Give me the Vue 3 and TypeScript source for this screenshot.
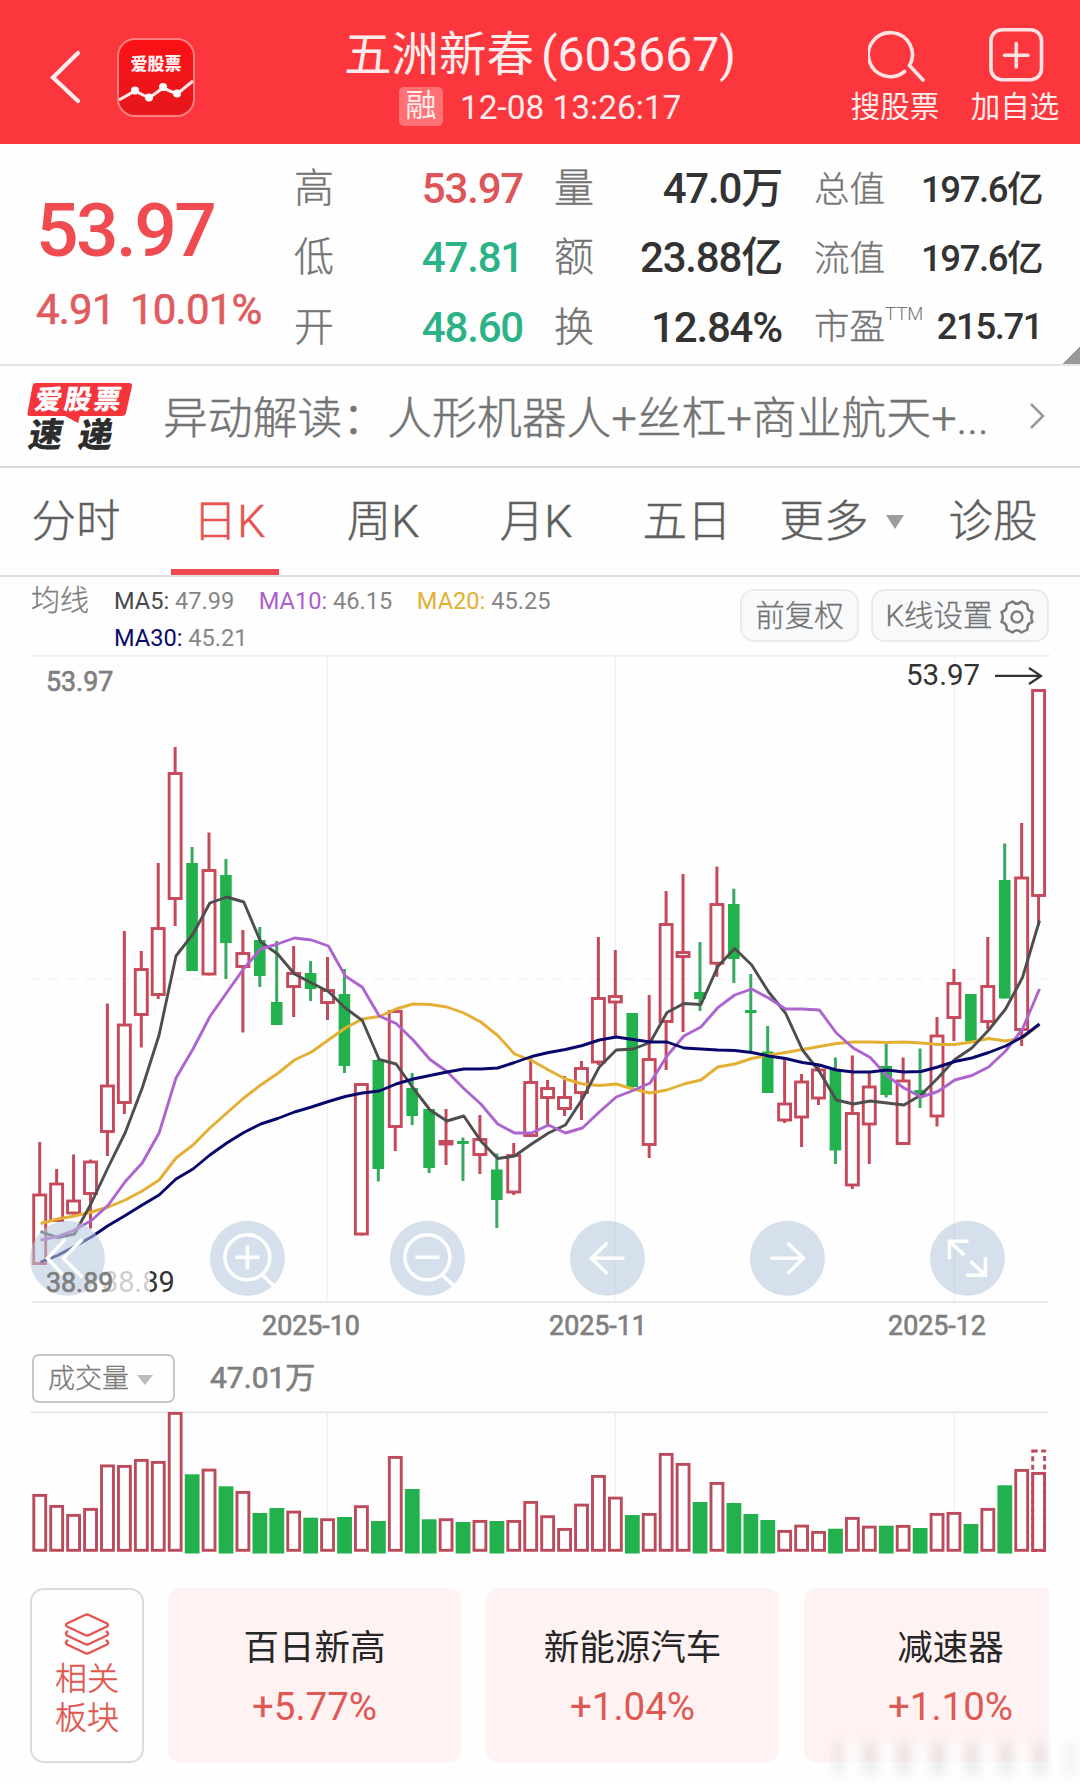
<script setup lang="ts">
interface Quote { label: string; value: string; tone?: string; sup?: string }
interface Candle { x: number; up: boolean; high: number; top: number; bottom: number; low: number; vol: number }

const mainQuotes: Quote[][] = [
  [{ label: '高', value: '53.97', tone: 'up' }, { label: '低', value: '47.81', tone: 'down' }, { label: '开', value: '48.60', tone: 'down' }],
  [{ label: '量', value: '47.0万' }, { label: '额', value: '23.88亿' }, { label: '换', value: '12.84%' }],
  [{ label: '总值', value: '197.6亿' }, { label: '流值', value: '197.6亿' }, { label: '市盈', value: '215.71', sup: 'TTM' }],
]

const tabs = ['分时', '日K', '周K', '月K', '五日', '更多', '诊股']

const averages = [
  { name: 'MA5', value: '47.99', color: '#484848' },
  { name: 'MA10', value: '46.15', color: '#ad5ecb' },
  { name: 'MA20', value: '45.25', color: '#e3b030' },
  { name: 'MA30', value: '45.21', color: '#0a0a6c' },
]

const boards = [
  { name: '百日新高', change: '+5.77%' },
  { name: '新能源汽车', change: '+1.04%' },
  { name: '减速器', change: '+1.10%' },
]

const px = (i: number) => 39.7 + i * 16.93

// direction, high, body top, body bottom, low, volume top
const raw: [string, number, number, number, number, number][] = [
  ['r', 1142, 1193.5, 1265, 1265, 1494], ['r', 1169, 1182.5, 1222, 1222, 1505], ['r', 1154.5, 1199.5, 1214.5, 1214.5, 1514],
  ['r', 1159.5, 1160.5, 1195, 1228.5, 1508], ['r', 1003.5, 1084.5, 1133, 1156, 1464.5], ['r', 931, 1023.5, 1104, 1114, 1465],
  ['r', 951, 968, 1016, 1047.5, 1459], ['r', 863, 927, 996, 999, 1461], ['r', 747, 772, 900, 926, 1412],
  ['g', 847, 863, 971, 971, 1474.3], ['r', 832.5, 869, 975.5, 975.5, 1468.7], ['g', 859, 875, 943, 979, 1486.3],
  ['r', 930, 952, 968, 1032.5, 1491], ['g', 927, 940, 976, 987, 1513], ['g', 941, 1002, 1025, 1025, 1508],
  ['r', 946, 972, 988, 1017, 1510.7], ['g', 961, 973, 989, 1001, 1517.7], ['r', 957, 989, 1004, 1020, 1518.3],
  ['g', 969, 994, 1066, 1073, 1517], ['r', 1083, 1083, 1235.5, 1235.5, 1505.3], ['g', 1059, 1060, 1169, 1181.5, 1521],
  ['r', 1010, 1010, 1128, 1151, 1456], ['g', 1073, 1088, 1116, 1125, 1489], ['g', 1108.5, 1109, 1168, 1173, 1519.3],
  ['r', 1109, 1140, 1145.5, 1165, 1518.3], ['g', 1137.5, 1141, 1144, 1181, 1522], ['r', 1115, 1138, 1156, 1174, 1520],
  ['g', 1153.5, 1169.5, 1200, 1228, 1521], ['r', 1143, 1154, 1193.5, 1195, 1520], ['r', 1056, 1081, 1137, 1137, 1501],
  ['r', 1080, 1087, 1099, 1127, 1515.3], ['r', 1076, 1096, 1110, 1116, 1528], ['r', 1061, 1067, 1094, 1120, 1503.7],
  ['r', 937, 997, 1063.5, 1065, 1475], ['r', 950, 995, 1003.5, 1036.5, 1496.7], ['g', 1013, 1013, 1087, 1088, 1515],
  ['r', 995, 1058, 1146, 1158, 1513], ['r', 891, 923, 1023, 1070, 1453], ['r', 874, 951, 958, 1032, 1463],
  ['g', 942, 992, 999, 1011, 1502], ['r', 866.5, 903, 964.7, 976.7, 1482], ['g', 888.7, 904, 959, 983, 1503],
  ['g', 974, 1010, 1013, 1051, 1514], ['g', 1026, 1051.5, 1093, 1093, 1520], ['r', 1059, 1102.5, 1121.5, 1123, 1530],
  ['r', 1074, 1080.5, 1118.5, 1147, 1524.7], ['r', 1065, 1068.5, 1099.5, 1105, 1531], ['g', 1057.5, 1069, 1150.5, 1164, 1528.7],
  ['r', 1055.5, 1112, 1186.5, 1189, 1517], ['r', 1072.5, 1085.5, 1125.5, 1164, 1525.7], ['g', 1043.5, 1066, 1095, 1097.5, 1525.7],
  ['r', 1057.5, 1079.5, 1145, 1145, 1525], ['g', 1048.5, 1090, 1095, 1108, 1528], ['r', 1017, 1034.5, 1117.5, 1126.5, 1513],
  ['r', 969, 982, 1019, 1041, 1512], ['g', 994, 994, 1041, 1041, 1524], ['r', 937, 985, 1023, 1029, 1508],
  ['g', 843.5, 880, 998.5, 998.5, 1485.3], ['r', 823, 876.5, 1031, 1046, 1469], ['r', 689, 689, 897, 925.5, 1472],
]

const candles: Candle[] = raw.map((r, i) => ({
  x: px(i), up: r[0] === 'r', high: r[1], top: r[2], bottom: r[3], low: r[4], vol: r[5],
}))

const series = [
  { color: '#e3b033', ys: [1223.5, 1219, 1216, 1212, 1207, 1200, 1191, 1180, 1158, 1145, 1128, 1113, 1098, 1085, 1073.5, 1060, 1052, 1040, 1028, 1019, 1016.5, 1009, 1004, 1004.5, 1007, 1013, 1022, 1035.5, 1054, 1060.5, 1070, 1079, 1084, 1085.5, 1084, 1089, 1093, 1090, 1084, 1080, 1067, 1064, 1058.5, 1055, 1052.5, 1049.5, 1046.5, 1043.5, 1042, 1042, 1042.5, 1042, 1043, 1044.5, 1044.5, 1042, 1038.5, 1041, 1038, 1024.5] },
  { color: '#4e4e4e', ys: [1231.7, 1237.5, 1234, 1203, 1167, 1132.5, 1088, 1035, 956, 934, 903, 897, 902, 942, 954, 974, 983, 991.5, 1008, 1020.5, 1059.5, 1064, 1088, 1110, 1121, 1116, 1141, 1158.5, 1156, 1144, 1133, 1125, 1099, 1067, 1050, 1049, 1042.5, 1012.5, 1003.5, 1004.5, 966.6, 948.5, 965, 992, 1013, 1050, 1071.5, 1100, 1104, 1101, 1103, 1105, 1095, 1078, 1059.5, 1048, 1030, 1009, 977.5, 920.5] },
  { color: '#ad64cf', ys: [1240, 1236.5, 1230, 1220.5, 1205, 1181.5, 1163, 1133, 1078, 1049, 1016.5, 992.5, 968.5, 949, 944, 938, 940, 946, 976, 987.3, 1016, 1023.5, 1040, 1059.5, 1071.5, 1088.5, 1104, 1124, 1133, 1133, 1125, 1133, 1128, 1112, 1097, 1090.5, 1083, 1056, 1036, 1027, 1007.7, 995, 989, 998, 1009, 1009, 1010, 1033, 1048, 1057.5, 1076, 1088, 1097, 1091.5, 1080, 1075.5, 1067, 1051, 1029, 989] },
  { color: '#08086c', ys: [1262, 1255.5, 1246.5, 1237, 1225.5, 1215.5, 1205, 1195, 1179, 1169, 1155, 1143, 1132.5, 1124, 1118.5, 1112, 1107, 1101.5, 1096.5, 1093, 1091, 1084, 1079, 1075.5, 1072, 1069, 1069, 1068, 1062.5, 1056.5, 1052.5, 1049.5, 1045.5, 1040, 1037, 1039.5, 1042, 1042, 1048, 1049, 1050, 1050.5, 1052.5, 1056, 1058.5, 1062.5, 1065, 1070, 1072, 1072, 1070, 1072, 1071.5, 1067, 1061.5, 1058, 1052.5, 1046, 1037, 1024] },
].map(s => ({ color: s.color, points: s.ys.map((y, i) => `${(px(i) + 0.9).toFixed(1)},${y}`).join(' ') }))

// icons are drawn around the centre of each round button
const controls = [
  { x: 67.4, d: 'M-2-19-20 0-2 19M15-19-4 0 15 19' },
  { x: 247.4, d: 'M22.5-1A22.5 22.5 0 1 1-22.5-1 22.5 22.5 0 0 1 22.5-1ZM14 16 27 28M-12-1H12M0-13V11' },
  { x: 427.4, d: 'M22.5-1A22.5 22.5 0 1 1-22.5-1 22.5 22.5 0 0 1 22.5-1ZM14 16 27 28M-12-1H12' },
  { x: 607.4, d: 'M17 0H-15M0-15.5-16 0 0 15.5' },
  { x: 787.4, d: 'M-17 0H15M0-15.5 16 0 0 15.5' },
  { x: 967.4, d: 'M-18 1V-17H1M-18-17-3-3M18-1V17H-1M18 17 3 3' },
]

const gridX = [327.3, 615.3, 954.4]
const months = [{ x: 311, t: '2025-10' }, { x: 598, t: '2025-11' }, { x: 937, t: '2025-12' }]
</script>

<template>
  <main class="page">
    <header class="head">
      <svg class="back" width="34" height="56" viewBox="0 0 34 56"><path d="M30 4 5 28.5 30 52" fill="none" stroke="#ffeded" stroke-width="4.2" stroke-linecap="round" /></svg>
      <div class="app-logo">
        <span>爱股票</span>
        <svg width="74" height="30" viewBox="0 0 74 30"><path d="M0 24 16 15 30 22 44 12 58 18 74 5" fill="none" stroke="#ffe9e9" stroke-width="3" /><g fill="#fff"><circle cx="16" cy="14.5" r="4" /><circle cx="30" cy="21.5" r="4" /><circle cx="44" cy="11" r="4" /><circle cx="58" cy="17.5" r="4" /></g></svg>
      </div>
      <div class="title">
        <h1>五洲新春<span>(603667)</span></h1>
        <p><i>融</i><span>12-08 13:26:17</span></p>
      </div>
      <div class="action">
        <svg width="60" height="60" viewBox="0 0 60 60" fill="none" stroke="#ffe3e3" stroke-width="3.6" stroke-linecap="round"><path d="M36.500 46.500A22 22 0 1 1 41.500 40.500L55 55" /></svg>
        <span>搜股票</span>
      </div>
      <div class="action last">
        <svg width="60" height="60" viewBox="0 0 60 60" fill="none" stroke="#ffe3e3" stroke-width="3.6" stroke-linecap="round"><rect x="4" y="4.800" width="50.500" height="50" rx="11" /><path d="M29.300 18.500V42M17.500 30.200H41" /></svg>
        <span>加自选</span>
      </div>
    </header>

    <section class="quote">
      <div class="price">
        <strong>53.97</strong>
        <p><span>4.91</span><span>10.01%</span></p>
      </div>
      <div v-for="(col, c) in mainQuotes" :key="c" class="col" :class="'col' + c">
        <div v-for="q in col" :key="q.label" class="cell">
          <span class="label">{{ q.label }}<sup v-if="q.sup">{{ q.sup }}</sup></span>
          <b :class="q.tone">{{ q.value }}</b>
        </div>
      </div>
      <span class="corner"></span>
    </section>

    <section class="news">
      <div class="news-logo">
        <svg width="106" height="40" viewBox="0 0 106 40"><path d="M9 0H102Q105.500 0 105 3L99 30Q98 33 95 33H53L51 40 38 33H3Q0 33 .5 30L5.500 3Q6 0 9 0Z" fill="#f6343c" /></svg>
        <span class="l1">爱股票</span>
        <span class="l2">速递</span>
      </div>
      <p>异动解读：人形机器人+丝杠+商业航天+...</p>
      <svg width="18" height="30" viewBox="0 0 18 30"><path d="M3 3 15 15 3 27" fill="none" stroke="#999" stroke-width="2.600" /></svg>
    </section>

    <nav class="tabs">
      <span v-for="(t, i) in tabs" :key="t" :class="{ active: i === 1 }">{{ t }}<em v-if="i === 5"></em></span>
    </nav>

    <section class="ma">
      <h2>均线</h2>
      <ul>
        <li v-for="a in averages" :key="a.name"><b :style="{ color: a.color }">{{ a.name }}:</b> {{ a.value }}</li>
      </ul>
      <div class="pill adj">前复权</div>
      <div class="pill cfg">K线设置
        <svg width="36" height="36" viewBox="-18 -18 36 36" fill="none" stroke="#7c7c7c" stroke-width="2.500" stroke-linejoin="round"><circle r="5.500" /><path d="M-4.500-15.500Q0-11 4.500-15.500L10.500-12.500Q9.500-6.500 15.500-5Q13 0 15.500 5Q9.500 6.500 10.500 12.500L4.500 15.500Q0 11-4.500 15.500L-10.500 12.500Q-9.500 6.500-15.500 5Q-13 0-15.500-5Q-9.500-6.500-10.500-12.500Z" /></svg>
      </div>
    </section>

    <svg class="chart" width="1080" height="692" viewBox="0 654 1080 692">
      <g stroke="#ededed" stroke-width="1.500" fill="none">
        <path d="M31 655.800H1050" stroke="#f0f0f0" stroke-width="2" />
        <path d="M31 979H1050" stroke="#f3f3f3" stroke-dasharray="10 8" />
        <path v-for="x in gridX" :key="x" :d="`M${x} 656V1302`" stroke="#f2f2f2" />
        <path d="M32 1302.300H1048" stroke="#e2e2e2" />
      </g>
      <g v-for="(c, i) in candles" :key="i">
        <template v-if="c.up">
          <path :d="`M${c.x} ${c.high}V${c.top + 1}M${c.x} ${c.bottom - 1}V${c.low}`" stroke="#c5495a" stroke-width="3" />
          <rect :x="c.x - 6" :y="c.top + 1.5" width="12" :height="c.bottom - c.top - 3" stroke="#c5495a" stroke-width="2.900" :fill="i === 24 ? '#dc3545' : 'none'" />
        </template>
        <template v-else>
          <path :d="`M${c.x} ${c.high}V${c.low}`" stroke="#38a961" stroke-width="3" />
          <rect :x="c.x - 5.800" :y="c.top" width="11.600" :height="c.bottom - c.top" fill="#23b14d" />
        </template>
      </g>
      <polyline v-for="s in series" :key="s.color" :points="s.points" :stroke="s.color" fill="none" stroke-width="2.900" stroke-linejoin="round" />
      <text x="102" y="1291.500" font-size="29" fill="#333">38.89</text>
      <rect x="98" y="1266" width="52" height="30" fill="#fff" opacity=".76" />
      <g v-for="b in controls" :key="b.x" :transform="`translate(${b.x} 1258.300)`">
        <circle r="37.500" fill="#b5c9de" opacity=".57" />
        <path :d="b.d" fill="none" stroke="#fff" stroke-width="3.500" />
      </g>
      <text x="46" y="690.500" class="axis">53.97</text>
      <text x="46" y="1292" class="axis">38.89</text>
      <text x="906" y="685" font-size="29.500" fill="#333">53.97</text>
      <path d="M995 675.900H1040M1029 668 1041 675.900 1029 684" fill="none" stroke="#333" stroke-width="2.200" />
      <text v-for="m in months" :key="m.t" :x="m.x" y="1334.500" class="axis" text-anchor="middle">{{ m.t }}</text>
    </svg>

    <section class="vol-head">
      <div class="select">成交量<em></em></div>
      <b>47.01万</b>
    </section>

    <svg class="chart" width="1080" height="148" viewBox="0 1410 1080 148">
      <path d="M31 1412.300H1048" stroke="#e2e2e2" stroke-width="1.500" />
      <path v-for="x in gridX" :key="x" :d="`M${x} 1412V1553`" stroke="#f0f0f0" stroke-width="1.500" />
      <template v-for="(c, i) in candles" :key="i">
        <rect v-if="c.up" :x="c.x - 5.900" :y="c.vol + 1.400" width="11.900" :height="1551.700 - c.vol - 2.800" fill="#fff" stroke="#bb4a5b" stroke-width="2.900" />
        <rect v-else :x="c.x - 7.300" :y="c.vol" width="14.800" :height="1553.500 - c.vol" fill="#23b14d" />
      </template>
      <rect x="1032.700" y="1451" width="11.900" height="99.500" fill="none" stroke="#bb4a5b" stroke-width="2.900" stroke-dasharray="5 3.500" />
    </svg>

    <section class="boards">
      <div class="related">
        <svg width="46" height="42" viewBox="0 0 46 42" fill="none" stroke="#e5534f" stroke-width="2.400" stroke-linejoin="round"><path d="M21 2Q23 1 25 2L43 10.500Q45 12 43 13.500L25 22Q23 23 21 22L3 13.500Q1 12 3 10.500Z" /><path d="M4 18Q.5 20.500 3 22.500L21 31Q23 32 25 31L43 22.500Q45.500 20.500 42 18" /><path d="M4 27Q.5 29.500 3 31.500L21 40Q23 41 25 40L43 31.500Q45.500 29.500 42 27" /></svg>
        <span>相关<br>板块</span>
      </div>
      <div class="cards">
        <article v-for="b in boards" :key="b.name">
          <h3>{{ b.name }}</h3>
          <p>{{ b.change }}</p>
        </article>
      </div>
      <span class="smudge"></span>
    </section>
  </main>
</template>

<style>
body { margin: 0; background: #fff; }
</style>

<style scoped>
.page { width: 1080px; height: 1784px; overflow: hidden; box-sizing: border-box; background: #fefefe; font-family: Roboto, "Noto Sans CJK SC", sans-serif; line-height: 1.2; color: #333; }
.page * { box-sizing: border-box; margin: 0; padding: 0; font-style: normal; }
.page svg { flex: none; display: block; }

.head { height: 144px; background: #fb363c; display: flex; color: #ffecec; }
.back { margin: 49px 0 0 48px; }
.app-logo { width: 78px; height: 79px; margin: 38px 0 0 35px; border: 2.500px solid #ff7f81; border-radius: 18px; background: linear-gradient(#fb1116, #e5181c); overflow: hidden; display: flex; flex-direction: column; align-items: center; padding-top: 14px; }
.app-logo span { font-size: 17px; line-height: 20px; font-weight: 900; }
.app-logo svg { margin-top: 2px; }
.title { width: 390px; margin: 27px 0 0 149px; display: flex; flex-direction: column; }
.title h1 { font-size: 47.500px; line-height: 56px; font-weight: 400; white-space: nowrap; }
.title h1 span { margin-left: 7px; font-size: 48px; }
.title p { display: flex; align-items: center; margin: 4px 0 0 55px; height: 39px; font-size: 33.400px; line-height: 39px; white-space: nowrap; }
.title p span { padding-top: 1px; }
.title i { width: 44px; height: 39px; margin-right: 17px; border-radius: 5px; background: #ff7175; text-align: center; font-size: 31px; line-height: 38px; }
.action { width: 92px; margin: 25px 0 0 115px; display: flex; flex-direction: column; align-items: center; font-size: 29.500px; line-height: 34px; white-space: nowrap; }
.action span { margin-top: 5px; }
.action svg { margin-left: 6px; }
.action.last { margin-left: 28px; }
.action.last svg { margin-left: 4px; }

.quote { position: relative; height: 222px; border-bottom: 2px solid #e4e4e4; display: flex; }
.price { width: 294px; padding-left: 36px; color: #ef4b51; }
.price strong { display: block; margin-top: 44px; font-size: 75px; line-height: 84px; font-weight: 500; letter-spacing: -2.600px; white-space: nowrap; }
.price p { display: flex; gap: 21px; margin-top: 14px; font-size: 42px; line-height: 48px; font-weight: 400; color: #df5b5f; -webkit-text-stroke: .6px; letter-spacing: -.8px; }
.price p span:first-child { width: 73px; }
.col { padding-top: 10px; }
.cell { height: 69.500px; display: flex; justify-content: space-between; align-items: center; white-space: nowrap; line-height: 48px; }
.label { font-size: 40px; font-weight: 300; -webkit-text-stroke: .35px; color: #747474; }
.cell b { font-size: 42px; font-weight: 500; letter-spacing: -1.200px; color: #333; }
.cell b.up { color: #dd5459; }
.cell b.down { color: #2bb287; }
.col0 { width: 229px; }
.col1 { width: 228px; margin-left: 31px; }
.col2 { width: 228px; margin-left: 32px; padding-top: 12px; }
.col2 .cell { height: 68.500px; }
.col2 .label { position: relative; font-size: 35.500px; }
.col2 .cell b { font-size: 36.500px; letter-spacing: -1.450px; }
.col2 sup { position: absolute; left: 71px; top: -2px; font-size: 18.500px; line-height: 26px; -webkit-text-stroke: 0; }
.corner { position: absolute; right: 0; bottom: 0; width: 17px; height: 18px; background: linear-gradient(135deg, transparent 50%, #999 50%); }

.news { height: 102px; border-bottom: 2px solid #d9d9d9; display: flex; align-items: center; padding-left: 27px; }
.news-logo { position: relative; width: 106px; height: 66px; margin-right: 30px; }
.news-logo span { position: absolute; white-space: nowrap; font-weight: 900; transform: skewX(-10deg); }
.news-logo .l1 { left: 8px; top: 2px; font-size: 27px; line-height: 30px; letter-spacing: 2.500px; color: #fff; }
.news-logo .l2 { left: 2px; top: 35px; font-size: 34px; line-height: 34px; letter-spacing: 16px; color: #2d2d2d; }
.news p { width: 865px; padding-top: 6px; font-size: 44.850px; font-weight: 300; -webkit-text-stroke: .45px; color: #747474; white-space: nowrap; }

.tabs { height: 109px; border-bottom: 2px solid #dedede; display: grid; grid-template-columns: 152px 154px 154px 152px 150px 159px 144px; font-size: 44.500px; font-weight: 300; -webkit-text-stroke: .45px; color: #5f5f5f; }
.tabs span { position: relative; display: flex; align-items: center; justify-content: center; padding-top: 3px; }
.tabs em { margin: -3px 0 0 17px; border: 9px solid transparent; border-top: 14px solid #9d9d9d; border-bottom: 0; }
.tabs .active { color: #e9524f; }
.tabs .active::after { content: ""; position: absolute; left: 19px; bottom: 0; width: 108px; height: 6px; background: #f0494f; }

.ma { height: 77px; display: flex; padding-left: 31px; font-size: 23.600px; line-height: 37px; color: #858585; }
.ma h2 { width: 83px; font-size: 29px; line-height: 49px; font-weight: 300; -webkit-text-stroke: .3px; color: #7f7f7f; }
.ma ul { width: 626px; padding-top: 6px; display: flex; flex-wrap: wrap; align-content: flex-start; list-style: none; column-gap: 24.500px; padding-right: 130px; }
.ma li { white-space: nowrap; }
.ma li b { font-weight: 400; }
.pill { height: 53px; margin-top: 12px; padding-top: 2px; border: 2px solid #eaebee; border-radius: 14px; background: #f8f9fb; display: flex; align-items: center; justify-content: center; font-size: 29.500px; font-weight: 300; -webkit-text-stroke: .3px; color: #737373; white-space: nowrap; }
.adj { width: 119px; }
.cfg { width: 178px; margin-left: 12px; gap: 6px; }

.chart { width: 1080px; }
.axis { font-size: 26.800px; font-weight: 400; fill: #808080; stroke: #808080; stroke-width: .7px; }
.vol-head { height: 64px; display: flex; align-items: flex-start; padding: 8px 0 0 32px; }
.select { width: 143px; height: 49px; border: 2px solid #c6c6c6; border-radius: 7px; display: flex; align-items: center; padding: 2px 0 0 14px; font-size: 27px; font-weight: 300; -webkit-text-stroke: .3px; color: #7a7a7a; }
.select em { margin-left: 8px; border: 8px solid transparent; border-top: 10px solid #bcbcbc; border-bottom: 0; }
.vol-head b { margin-left: 35px; font-size: 30px; line-height: 47px; font-weight: 400; -webkit-text-stroke: .7px; color: #808080; }

.boards { position: relative; margin-top: 30px; height: 196px; display: flex; padding-left: 30px; }
.related { width: 114px; height: 175px; border: 2px solid #dcdcdc; border-radius: 14px; display: flex; flex-direction: column; align-items: center; padding-top: 23px; color: #e0554f; font-size: 32px; font-weight: 300; -webkit-text-stroke: .4px; line-height: 39px; }
.related span { margin-top: 5px; }
.cards { width: 881px; margin-left: 24px; display: flex; gap: 25px; overflow: hidden; height: 175px; }
.cards article { flex: none; width: 293px; height: 174px; border-radius: 12px; background: #fef2f2; text-align: center; padding-top: 37px; }
.cards h3 { font-size: 35.500px; line-height: 46px; font-weight: 400; color: #262626; }
.cards p { margin-top: 13px; font-size: 38.500px; line-height: 46px; color: #df5853; }
.smudge { position: absolute; left: 834px; top: 154px; width: 240px; height: 34px; filter: blur(5px); background: repeating-linear-gradient(90deg, rgba(150,140,140,.16) 0 6px, rgba(255,255,255,.6) 12px 24px, rgba(150,140,140,.1) 30px 34px); }
</style>
